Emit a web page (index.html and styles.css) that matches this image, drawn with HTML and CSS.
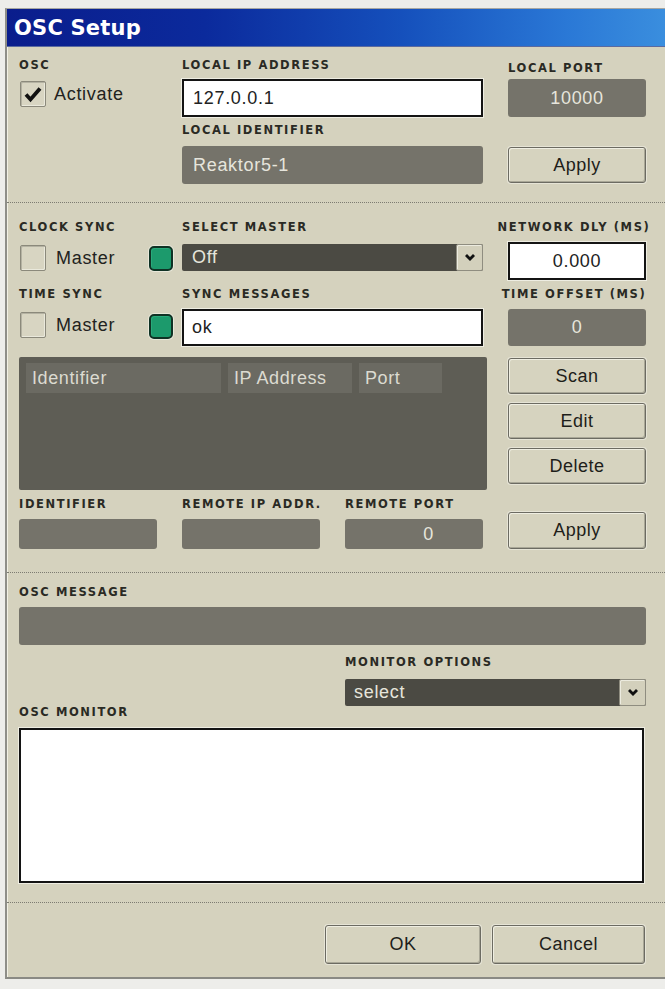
FILE: index.html
```html
<!DOCTYPE html>
<html>
<head>
<meta charset="utf-8">
<title>OSC Setup</title>
<link rel="stylesheet" href="styles.css">
</head>
<body>
<div class="window">
  <div class="titlebar">OSC Setup</div>
  <div class="body">
    <section class="sec sec1">
      <div class="lbl c1 r1">OSC</div>
      <div class="lbl c23 r1">Local IP Address</div>
      <div class="lbl c4 r1 lbl-port">Local Port</div>
      <div class="checkrow c1 r2 act">
        <span class="checkbox"><svg width="26" height="26" viewBox="0 0 26 26"><path d="M6 13.5 L10.5 18.5 L20 7.5" fill="none" stroke="#111" stroke-width="3.8" stroke-linejoin="miter" stroke-linecap="butt"/></svg></span>
        <span class="v">Activate</span>
      </div>
      <div class="input c23 r2">127.0.0.1</div>
      <div class="field center c4 r2 port">10000</div>
      <div class="lbl c23 r3 lbl-mid">Local Identifier</div>
      <div class="field c23 r4 ident">Reaktor5-1</div>
      <div class="btn c4 r4 apply1">Apply</div>
    </section>

    <section class="sec sec2">
      <div class="lbl c1 r1">Clock Sync</div>
      <div class="lbl c23 r1">Select Master</div>
      <div class="lbl c4 r1 lbl-wide">Network Dly (ms)</div>

      <div class="syncrow c1 r2">
        <span class="checkbox cb2"></span>
        <span class="v master">Master</span>
        <span class="led led1"></span>
      </div>
      <div class="select c23 r2 sel1">
        <span class="sel-text">Off</span>
        <span class="sel-arrow"><svg width="10" height="8" viewBox="0 0 10 8"><polygon points="0,2 2,0 5,3 8,0 10,2 5,7" fill="#111"/></svg></span>
      </div>
      <div class="input center c4 r2">0.000</div>

      <div class="lbl c1 r3 lbl-mid2">Time Sync</div>
      <div class="lbl c23 r3 lbl-mid2">Sync Messages</div>
      <div class="lbl c4 r3 lbl-wide lbl-mid2">Time Offset (ms)</div>

      <div class="syncrow c1 r4">
        <span class="checkbox cb4"></span>
        <span class="v master">Master</span>
        <span class="led led2"></span>
      </div>
      <div class="input c23 r4 okin">ok</div>
      <div class="field center c4 r4 offset">0</div>

      <div class="table c123 r5">
        <div class="thead">
          <span class="th th1">Identifier</span>
          <span class="th th2">IP Address</span>
          <span class="th th3">Port</span>
        </div>
      </div>
      <div class="btncol c4 r5">
        <div class="btn">Scan</div>
        <div class="btn">Edit</div>
        <div class="btn">Delete</div>
      </div>

      <div class="lbl c1 r6 lbl-mid2">Identifier</div>
      <div class="lbl c2 r6 lbl-mid2">Remote IP Addr.</div>
      <div class="lbl c3 r6 lbl-mid2">Remote Port</div>
      <div class="field c1 r7 small"></div>
      <div class="field c2 r7 small"></div>
      <div class="field c3 r7 small rport">0</div>
      <div class="btn c4 r67 apply2">Apply</div>
    </section>

    <section class="sec sec3">
      <div class="lbl call r1">OSC Message</div>
      <div class="field call r2 msg"></div>
      <div class="lbl c34 r3 lbl-end">Monitor Options</div>
      <div class="select c34 r4 sel2">
        <span class="sel-text">select</span>
        <span class="sel-arrow"><svg width="10" height="8" viewBox="0 0 10 8"><polygon points="0,2 2,0 5,3 8,0 10,2 5,7" fill="#111"/></svg></span>
      </div>
      <div class="lbl c1 r5">OSC Monitor</div>
      <div class="monitor call r6"></div>
    </section>

    <section class="foot">
      <div class="btn ok">OK</div>
      <div class="btn cancel">Cancel</div>
    </section>
  </div>
</div>
</body>
</html>
```

FILE: styles.css
```css
* { box-sizing: border-box; margin: 0; padding: 0; }
html, body { width: 665px; height: 989px; overflow: hidden; }
body {
  background: #ededea;
  font-family: "Liberation Sans", Arial, sans-serif;
}
.window {
  margin: 8px 0 0 5px;
  width: 660px;
  border-top: 1px solid #a6a6a2;
  border-left: 2px solid #8e8e88;
  border-bottom: 2px solid #8a8a84;
  background: #d5d2be;
}
.titlebar {
  height: 38px;
  line-height: 38px;
  padding-left: 7px;
  color: #ffffff;
  font-family: "DejaVu Sans", sans-serif;
  font-weight: bold;
  font-size: 21px;
  letter-spacing: 0.2px;
  background: linear-gradient(to right, #0a1d8c 0%, #0b2a9c 30%, #1550bc 60%, #2a78d6 85%, #3a8ede 100%);
  border-bottom: 1px solid #5a6aa0;
}
.body { box-shadow: inset 1px 0 0 #f1f0e4; }

/* grid sections */
.sec {
  display: grid;
  grid-template-columns: repeat(4, 138px);
  column-gap: 25px;
  padding-left: 12px;
}
.sec + .sec, .foot { border-top: 1px dotted #7d7c72; }

.sec1 { padding-top: 12px; padding-bottom: 18px; grid-template-rows: 20px 38px 29px 38px; }
.sec2 { padding-top: 18px; padding-bottom: 23px; grid-template-rows: 21px 38px 29px 37px 144px 29px 30px; }
.sec3 { padding-top: 13px; padding-bottom: 19px; grid-template-rows: 12px 47px 23px 38px 12px 165px; }

.c1 { grid-column: 1; }
.c2 { grid-column: 2; }
.c3 { grid-column: 3; }
.c4 { grid-column: 4; }
.c23 { grid-column: 2 / 4; }
.c34 { grid-column: 3 / 5; }
.c123 { grid-column: 1 / 4; }
.call { grid-column: 1 / 5; }
.r1 { grid-row: 1; }
.r2 { grid-row: 2; }
.r3 { grid-row: 3; }
.r4 { grid-row: 4; }
.r5 { grid-row: 5; }
.r6 { grid-row: 6; }
.r7 { grid-row: 7; }
.r67 { grid-row: 6 / 8; }

/* labels */
.lbl {
  font-family: "DejaVu Sans", sans-serif;
  font-weight: bold;
  font-size: 11.5px;
  letter-spacing: 1.6px;
  line-height: 12px;
  height: 12px;
  color: #2a2a24;
  text-transform: uppercase;
  white-space: nowrap;
  align-self: start;
}
.lbl-port { margin-top: 3px; }
.lbl-mid { margin-top: 7px; }
.lbl-mid2 { margin-top: 8px; }
.lbl-end { align-self: end; }
.lbl-wide { justify-self: center; margin-right: 6px; }

.v {
  font-size: 18px;
  letter-spacing: 0.7px;
  color: #222220;
}

/* checkbox rows */
.checkrow, .syncrow {
  display: flex;
  align-items: flex-start;
}
.act { margin-top: 2px; margin-left: 1px; }
.act .v { margin-left: 8px; line-height: 26px; }
.checkbox {
  width: 26px;
  height: 26px;
  flex: none;
  border: 1px solid #8b897b;
  border-radius: 2px;
  background: #d8d5c2;
  box-shadow: inset 1px 1px 0 #b4b2a2, inset -1px -1px 0 #eae9dc;
  position: relative;
}
.checkbox svg { position: absolute; left: -1px; top: -1px; }
.syncrow { margin-right: -16px; margin-left: 1px; }
.cb2 { margin-top: 3px; }
.cb4 { margin-top: 3px; }
.master { margin-left: 10px; line-height: 26px; margin-top: 3px; }
.led {
  margin-left: auto;
  width: 24px;
  height: 25px;
  border: 2px solid #0f3224;
  border-radius: 5px;
  background: #1c9a6c;
  box-shadow: 0 0 0 1px #e8e7da, inset 1px 1px 0 #28aa7a;
}
.led1 { margin-top: 4px; }
.led2 { margin-top: 5px; }

/* inputs */
.input {
  background: #ffffff;
  border: 2px solid #141414;
  box-shadow: 0 0 0 1px #eeede2;
  font-size: 18px;
  letter-spacing: 0.7px;
  color: #222;
  padding-left: 9px;
  display: flex;
  align-items: center;
}
.input.center { justify-content: center; padding-left: 0; }
.okin { padding-left: 8px; }

.field {
  background: #75736a;
  border-radius: 3px;
  color: #e6e5dc;
  font-size: 18px;
  letter-spacing: 0.7px;
  display: flex;
  align-items: center;
  padding-left: 10px;
}
.field.center { justify-content: center; padding-left: 0; }
.ident { padding-left: 11px; }
.rport { justify-content: flex-end; padding-right: 49px; }
.msg { margin-top: 9px; height: 38px; }

/* select */
.select {
  display: flex;
  background: #4b4a43;
  border-radius: 2px;
  height: 27px;
  color: #e6e5dc;
  font-size: 18px;
  letter-spacing: 0.7px;
}
.sel1 { margin-top: 2px; }
.sel2 { align-self: end; }
.sel-text { padding-left: 10px; line-height: 27px; flex: 1; }
.sel2 .sel-text { padding-left: 9px; }
.sel-arrow {
  width: 27px;
  flex: none;
  background: #d3d0bc;
  border: 1px solid #8f8d80;
  border-radius: 2px;
  box-shadow: inset 1px 1px 0 #ecebdf;
  display: flex;
  align-items: center;
  justify-content: center;
}

/* buttons */
.btn {
  height: 36px;
  background: #d6d3bf;
  border: 1px solid #6c6b62;
  border-radius: 3px;
  box-shadow: inset 1px 1px 0 #efeee2, inset -1px -1px 0 #a9a797, 0 0 0 1px #e6e4d6;
  font-size: 18px;
  letter-spacing: 0.5px;
  color: #1e1e1a;
  display: flex;
  align-items: center;
  justify-content: center;
}
.apply1 { margin-top: 1px; }
.btncol {
  display: flex;
  flex-direction: column;
  gap: 9px;
  margin-top: 12px;
}
.apply2 { align-self: end; height: 37px; }

/* table */
.table {
  margin-top: 11px;
  height: 133px;
  margin-right: -4px;
  background: #5e5d55;
  border-radius: 2px;
  padding: 6px 0 0 7px;
}
.thead { display: flex; gap: 7px; }
.th {
  height: 30px;
  line-height: 30px;
  background: #6b6a62;
  color: #dcdbd1;
  font-size: 18px;
  letter-spacing: 0.6px;
  padding-left: 6px;
}
.th1 { width: 195px; }
.th2 { width: 124px; }
.th3 { width: 83px; }
.small { height: 30px; }

/* monitor */
.monitor {
  margin-top: 10px;
  height: 155px;
  margin-right: 2px;
  background: #ffffff;
  border: 2px solid #141414;
  box-shadow: 0 0 0 1px #eeede2;
}

/* footer */
.foot {
  display: flex;
  justify-content: flex-end;
  gap: 11px;
  padding: 22px 20px 13px 0;
}
.foot .btn { height: 39px; }
.ok { width: 156px; }
.cancel { width: 153px; }
```
